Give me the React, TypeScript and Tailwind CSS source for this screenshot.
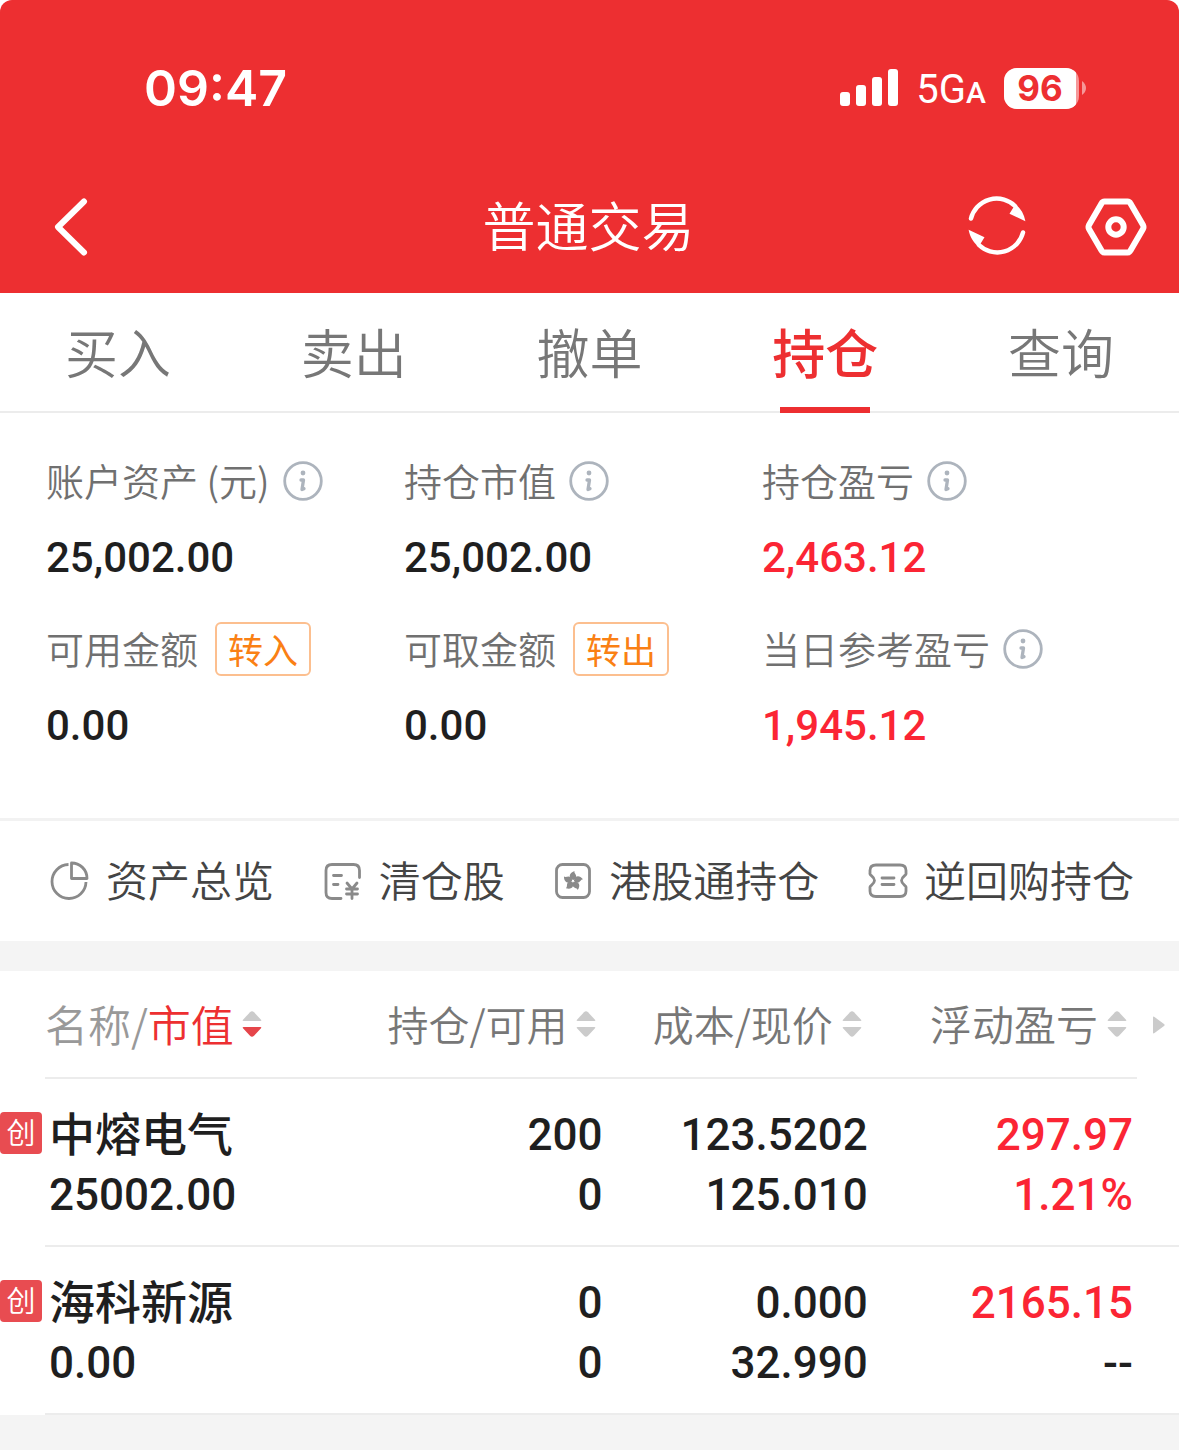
import type { ReactNode } from 'react';
import clsx from 'clsx';

const tabs = ['买入', '卖出', '撤单', '持仓', '查询'];
const activeTab = '持仓';

const stats = [
  { label: '账户资产 (元)', value: '25,002.00', info: true },
  { label: '持仓市值', value: '25,002.00', info: true },
  { label: '持仓盈亏', value: '2,463.12', info: true, red: true },
  { label: '可用金额', value: '0.00', action: '转入' },
  { label: '可取金额', value: '0.00', action: '转出' },
  { label: '当日参考盈亏', value: '1,945.12', info: true, red: true },
];

const holdings = [
  { name: '中熔电气', market: '25002.00', qty: '200', avail: '0', cost: '123.5202', price: '125.010', profit: '297.97', rate: '1.21%' },
  { name: '海科新源', market: '0.00', qty: '0', avail: '0', cost: '0.000', price: '32.990', profit: '2165.15', rate: '--' },
];

function SignalIcon() {
  return (
    <svg width="58" height="38" viewBox="0 0 58 38" fill="#fff" aria-hidden="true">
      <rect x="0" y="23" width="10" height="14" rx="3" />
      <rect x="16" y="16" width="10" height="21" rx="3" />
      <rect x="32" y="8" width="10" height="29" rx="3" />
      <rect x="48" y="0" width="10" height="37" rx="3" />
    </svg>
  );
}

function Battery() {
  return (
    <div className="flex items-center gap-[3px]">
      <div className="flex h-[41px] w-[75px] overflow-hidden rounded-[13px] bg-white/50">
        <span className="flex w-[72px] items-center justify-center bg-white font-[Inter,sans-serif] text-[35px] leading-none font-bold text-[#ed2f31]">
          96
        </span>
      </div>
      <svg width="4" height="14" viewBox="0 0 4 14" aria-hidden="true">
        <path d="M0 0C2.500 2 4 4 4 7S2.500 12 0 14Z" fill="#fff" fillOpacity="0.5" />
      </svg>
    </div>
  );
}

function BackIcon() {
  return (
    <svg width="34" height="58" viewBox="0 0 34 58" fill="none" stroke="#fff" strokeWidth="6" strokeLinecap="round" strokeLinejoin="round" aria-hidden="true">
      <path d="M30 3.500 4 29l26 25.500" />
    </svg>
  );
}

function RefreshIcon() {
  return (
    <svg width="58" height="58" viewBox="0 0 58 58" className="overflow-visible" aria-hidden="true">
      {[0, 180].map((deg) => (
        <g key={deg} transform={`rotate(${deg} 29 27.500)`}>
          <path d="M3 20.500A26.500 26.500 0 0 1 47 8" fill="none" stroke="#fff" strokeWidth="4.500" strokeLinecap="round" />
          <path d="M57.400 23.200 41.500 15.700l4-6.500L46 5C52 9.500 56 15.500 57.400 23.200Z" fill="#fff" />
        </g>
      ))}
    </svg>
  );
}

function SettingsIcon() {
  return (
    <svg width="62" height="58" viewBox="0 0 62 58" fill="none" stroke="#fff" strokeWidth="6" strokeLinejoin="round" aria-hidden="true">
      <path d="M19.500 3.500h23q2 0 3 2L58 27q1 2 0 4L45.500 52.500q-1 2-3 2h-23q-2 0-3-2L4 31q-1-2 0-4L16.500 5.500q1-2 3-2Z" />
      <circle cx="31" cy="29" r="7.700" />
    </svg>
  );
}

function InfoIcon() {
  return (
    <svg width="40" height="40" viewBox="0 0 40 40" fill="none" stroke="#adb4bd" strokeLinecap="round" strokeLinejoin="round" aria-hidden="true">
      <circle cx="20" cy="20" r="18.300" strokeWidth="2.800" />
      <circle cx="20" cy="12" r="2.400" fill="#adb4bd" stroke="none" />
      <path d="M18 19h2.500L19 28.500l2-.8" strokeWidth="3.300" />
    </svg>
  );
}

function SortIcon({ desc = false }: { desc?: boolean }) {
  return (
    <svg width="20" height="26" viewBox="0 0 20 26" aria-hidden="true">
      <path d="M1.500 10Q0 10 1 8.700L8 1.200q2-2 4 0l7 7.500q1 1.300-.5 1.300Z" fill="#cbcbcb" />
      <path d="M1.500 16Q0 16 1 17.300l7 7.500q2 2 4 0l7-7.500q1-1.300-.5-1.300Z" fill={desc ? '#e5454a' : '#cbcbcb'} />
    </svg>
  );
}

function LineIcon({ children }: { children: ReactNode }) {
  return (
    <svg width="40" height="40" viewBox="0 0 40 40" fill="none" stroke="#8a8a8a" strokeWidth="2.800" strokeLinecap="round" strokeLinejoin="round" aria-hidden="true">
      {children}
    </svg>
  );
}

const links = [
  {
    label: '资产总览',
    icon: (
      <LineIcon>
        <path d="M18.500 3.500A17 17 0 1 0 36 21" strokeLinecap="butt" />
        <path d="M21.500 2V17.500H37C37 8.500 30 2 21.500 2Z" />
      </LineIcon>
    ),
  },
  {
    label: '清仓股',
    icon: (
      <LineIcon>
        <path d="M18 37.500H9q-6 0-6-6V9.500q0-6 6-6h21.500q6 0 6 6v7" />
        <path d="M10.500 14.500h8M10.500 23.500h4.500M24 22l5 6 5-6M29 28v9.500M23.500 28h11M23.500 33h11" />
      </LineIcon>
    ),
  },
  {
    label: '港股通持仓',
    icon: (
      <LineIcon>
        <rect x="3.500" y="3.500" width="33" height="33" rx="6" />
        {[0, 72, 144, 216, 288].map((deg) => (
          <path key={deg} d="M20 19C15.500 17 15.500 12 21.500 10 20.800 12.500 24 13.500 23 16.500 22.500 18.500 21 18.500 20 19Z" fill="#8a8a8a" stroke="none" transform={`rotate(${deg} 20 20)`} />
        ))}
      </LineIcon>
    ),
  },
  {
    label: '逆回购持仓',
    icon: (
      <LineIcon>
        <path d="M8 4h24q6 0 6 5.500v3c1 1.500-4.500 3-4.500 7s5.500 5.500 4.500 7v3.500q0 5.500-6 5.500H8q-6 0-6-5.500v-3.500c-1-1.500 4.500-3 4.500-7s-5.500-5.500-4.500-7v-3q0-5.500 6-5.500Z" />
        <path d="M14 17h12M14 23.500h12" />
      </LineIcon>
    ),
  },
];

export default function App() {
  return (
    <div className="min-h-screen bg-[#f4f4f4] font-['Noto_Sans_CJK_SC',sans-serif] text-[#1f1f1f]" lang="zh-CN">
      <div className="bg-white">
        <header className="rounded-t-xl bg-[#ed2f31] text-white">
          <div className="flex h-[160px] items-center justify-between pt-4 pr-[93px] pl-[144px]">
            <span className="font-[Inter,sans-serif] text-[50px] leading-none font-semibold">09:47</span>
            <div className="flex items-center gap-[18px]">
              <SignalIcon />
              <span className="pt-1 font-[Roboto,sans-serif] text-[40px] leading-none">
                5G<span className="text-[30px] font-medium">A</span>
              </span>
              <Battery />
            </div>
          </div>
          <div className="grid h-[133px] grid-cols-[1fr_auto_1fr] items-center pr-8 pl-[54px]">
            <button type="button" aria-label="返回" className="justify-self-start">
              <BackIcon />
            </button>
            <h1 className="pr-6 pb-1 text-[53px] leading-none font-[350]">普通交易</h1>
            <div className="flex gap-[59px] justify-self-end">
              <button type="button" aria-label="刷新">
                <RefreshIcon />
              </button>
              <button type="button" aria-label="设置">
                <SettingsIcon />
              </button>
            </div>
          </div>
        </header>

        <nav className="grid grid-cols-5 border-b-2 border-[#ececec]">
          {tabs.map((tab) => (
            <button
              key={tab}
              type="button"
              className={clsx(
                'relative h-[118px] pb-0.5 text-[53px] leading-[116px]',
                tab === activeTab ? 'font-medium text-[#ed2f31]' : 'font-[350] text-[#777]'
              )}
            >
              {tab}
              {tab === activeTab && (
                <span className="absolute -bottom-0.5 left-1/2 h-1.5 w-[90px] -translate-x-1/2 bg-[#ed2f31]" />
              )}
            </button>
          ))}
        </nav>

        <section className="grid grid-cols-3 gap-y-[38px] border-b-[3px] border-[#f2f2f2] pt-[41px] pr-[59px] pb-[66px] pl-[46px]">
          {stats.map((s) => (
            <div key={s.label}>
              <div className="flex h-[54px] items-center text-[38px] leading-none font-[350] whitespace-nowrap text-[#707070]">
                <span className="pb-0.5">{s.label}</span>
                {s.info && (
                  <button type="button" aria-label={`${s.label}说明`} className="ml-[13px]">
                    <InfoIcon />
                  </button>
                )}
                {s.action && (
                  <button type="button" className="ml-[17px] h-[54px] w-[96px] rounded-md border-2 border-[#fcbf8f] pb-0.5 text-[35px] leading-none font-normal text-[#fa8014]">
                    {s.action}
                  </button>
                )}
              </div>
              <p className={clsx('mt-[22px] font-[Roboto,sans-serif] text-[42px] leading-[56px] font-medium -mb-0.5', s.red && 'text-[#fb2534]')}>
                {s.value}
              </p>
            </div>
          ))}
        </section>

        <section className="flex h-[120px] items-center justify-between pr-[45px] pl-[50px]">
          {links.map((l) => (
            <a key={l.label} href="#" className="flex items-center gap-4 text-[42px] leading-none font-[350] whitespace-nowrap text-[#444]">
              {l.icon}
              <span className="pb-1">{l.label}</span>
            </a>
          ))}
        </section>
        <div className="h-[30px] bg-[#f4f4f4]" />

        <table className="w-full table-fixed border-separate border-spacing-0">
          <colgroup>
            <col className="w-[45px]" />
            <col />
            <col className="w-[22.5%]" />
            <col className="w-[22.5%]" />
            <col className="w-[22.5%]" />
            <col className="w-[42px]" />
          </colgroup>
          <thead>
            <tr className="h-[108px] leading-none whitespace-nowrap text-[#777]">
              <td />
              <th className="border-b-2 border-[#ececec] p-0 text-left font-[350]">
                <button type="button" className="flex items-center gap-2 text-[43px]">
                  <span className="pb-0.5 text-[#999]">
                    名称/<span className="text-[#ed2f31]">市值</span>
                  </span>
                  <SortIcon desc />
                </button>
              </th>
              <th className="border-b-2 border-[#ececec] p-0 pr-[10px] font-[350]">
                <button type="button" className="ml-auto flex items-center gap-[9px] text-[41px]">
                  <span className="pb-0.5">持仓/可用</span>
                  <SortIcon />
                </button>
              </th>
              <th className="border-b-2 border-[#ececec] p-0 pr-[10px] font-[350]">
                <button type="button" className="ml-auto flex items-center gap-[9px] text-[41px]">
                  <span className="pb-0.5">成本/现价</span>
                  <SortIcon />
                </button>
              </th>
              <th className="border-b-2 border-[#ececec] p-0 pr-[10px] font-[350]">
                <button type="button" className="ml-auto flex items-center gap-[9px] text-[42px]">
                  <span className="pb-0.5">浮动盈亏</span>
                  <SortIcon />
                </button>
              </th>
              <td className="p-0 pl-4">
                <svg width="12" height="18" viewBox="0 0 12 18" aria-hidden="true">
                  <path d="M0 1.500Q0 0 1.500 1L11 8q1.300 1 0 2L1.500 17Q0 18 0 16.500Z" fill="#cbcbcb" />
                </svg>
              </td>
            </tr>
          </thead>
          <tbody className="font-[Roboto,'Noto_Sans_CJK_SC',sans-serif] text-[44px] leading-[60px] font-medium">
            {holdings.map((h) => (
              <tr key={h.name} className="h-[168px] text-right">
                <td className="p-0 pt-[33px] text-left align-top">
                  <span className="flex size-[42px] items-center justify-center rounded bg-[#e84c51] pt-0.5 text-[29px] leading-none font-[350] text-white">
                    创
                  </span>
                </td>
                <td className="border-b-2 border-[#ececec] p-0 pt-1.5 pl-1 text-left">
                  <p className="text-[46px]">{h.name}</p>
                  <p>{h.market}</p>
                </td>
                <td className="border-b-2 border-[#ececec] p-0 pt-1.5 pr-1">
                  <p>{h.qty}</p>
                  <p>{h.avail}</p>
                </td>
                <td className="border-b-2 border-[#ececec] p-0 pt-1.5 pr-1">
                  <p>{h.cost}</p>
                  <p>{h.price}</p>
                </td>
                <td className="border-b-2 border-[#ececec] p-0 pt-1.5 pr-1 text-[#fb2534]">
                  <p>{h.profit}</p>
                  <p className={clsx(h.rate === '--' && 'text-[#1f1f1f]')}>{h.rate}</p>
                </td>
                <td className="border-b-2 border-[#ececec] p-0" />
              </tr>
            ))}
          </tbody>
        </table>
      </div>
    </div>
  );
}
